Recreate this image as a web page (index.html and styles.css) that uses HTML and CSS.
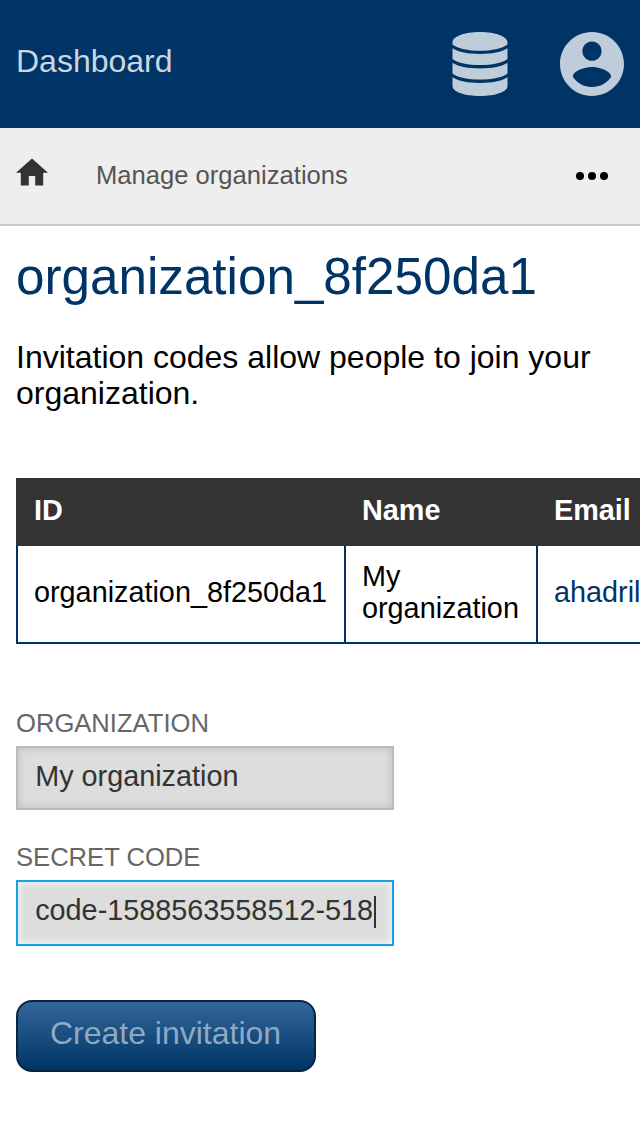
FILE: index.html
```html
<!DOCTYPE html>
<html lang="en">
<head>
<meta charset="utf-8">
<title>Manage organizations</title>
<link rel="stylesheet" href="styles.css">
</head>
<body>
<header class="topbar">
  <span class="topbar-title">Dashboard</span>
  <svg class="icon-db" width="56" height="64" viewBox="0 0 56 64" aria-hidden="true"><path d="M28 0C43.500 0 55.500 4.500 55.500 10.500V12.500C50 16.500 40 18.800 28 18.800S6 16.500 .5 12.500V10.500C.5 4.500 12.500 0 28 0ZM.5 16.300C6 20 16 22 28 22S50 20 55.500 16.300V27C50 31 40 33.100 28 33.100S6 31 .5 27ZM.5 30.800C6 34.500 16 36.500 28 36.500S50 34.500 55.500 30.800V41.500C50 45.500 40 47.600 28 47.600S6 45.500 .5 41.500ZM.5 45.300C6 49 16 51 28 51S50 49 55.500 45.300V54C55.500 60 43 64 28 64S.5 60 .5 54Z"/></svg>
  <svg class="icon-user" width="64" height="64" viewBox="2 2 20 20" aria-hidden="true"><path d="M12 2C6.480 2 2 6.480 2 12s4.480 10 10 10 10-4.480 10-10S17.520 2 12 2zm0 3c1.660 0 3 1.340 3 3s-1.340 3-3 3-3-1.340-3-3 1.340-3 3-3zm0 14.200c-2.500 0-4.710-1.280-6-3.220.03-1.990 4-3.080 6-3.080 1.990 0 5.970 1.090 6 3.080-1.290 1.940-3.500 3.220-6 3.220z"/></svg>
</header>
<nav class="crumbs">
  <svg class="icon-home" width="32" height="28" viewBox="2 2.750 20 17.500" aria-hidden="true"><path d="M10 20v-6h4v6h5v-8h3L12 3 2 12h3v8z"/></svg>
  <span class="crumb">Manage organizations</span>
  <svg class="icon-more" width="32" height="8" viewBox="0 0 32 8" aria-hidden="true"><circle cx="4" cy="4" r="4"/><circle cx="16" cy="4" r="4"/><circle cx="28" cy="4" r="4"/></svg>
</nav>
<main class="content">
  <h1 class="title">organization_8f250da1</h1>
  <p class="intro">Invitation codes allow people to join your organization.</p>
  <div class="table-wrap">
    <table class="table">
      <thead><tr><th class="col-id">ID</th><th class="col-name">Name</th><th class="col-email">Email</th></tr></thead>
      <tbody><tr><td>organization_8f250da1</td><td>My organization</td><td><a class="mail">ahadril</a></td></tr></tbody>
    </table>
  </div>
  <form class="form">
    <label class="label">ORGANIZATION</label>
    <div class="field">My organization</div>
    <label class="label label-code">SECRET CODE</label>
    <div class="field field-focus">code-1588563558512-518<span class="caret"></span></div>
    <button class="submit" type="button">Create invitation</button>
  </form>
</main>
</body>
</html>
```
FILE: styles.css
```css
* { box-sizing: border-box; }
body {
  margin: 0;
  overflow: hidden;
  background: #fff;
  color: #000;
  font: 32px/36px "Liberation Sans", Arial, sans-serif;
}
svg { display: block; flex: none; }

.topbar {
  display: flex;
  align-items: flex-start;
  height: 128px;
  padding: 32px 16px 0;
  background: #036;
  color: #ccd6e0;
}
.topbar-title { flex: 1; padding-top: 11px; }
.icon-db, .icon-user { fill: #bfccd9; }
.icon-user { margin-left: 52px; }

.crumbs {
  display: flex;
  align-items: flex-start;
  height: 98px;
  padding: 30px 32px 0 16px;
  border-bottom: 2px solid #ccc;
  background: #eee;
}
.icon-home { fill: #333; }
.crumb {
  flex: 1;
  margin-left: 48px;
  padding-top: 2px;
  font-size: 25.6px;
  line-height: 30px;
  color: #555;
}
.icon-more { margin-top: 14px; }

.content { padding: 22px 16px 0; }
.title {
  margin: 0;
  font-size: 51.2px;
  font-weight: normal;
  line-height: 58px;
  color: #036;
}
.intro { margin: 33px 0 67px; }

.table-wrap { width: 624px; overflow: hidden; }
.table {
  width: 900px;
  table-layout: fixed;
  border-collapse: separate;
  border-spacing: 0;
  font-size: 28.8px;
  line-height: 32px;
}
.table th {
  height: 68px;
  padding: 16px 16px 20px 18px;
  background: #333;
  color: #fff;
  text-align: left;
}
.table td {
  padding: 14px 16px 18px;
  border-left: 2px solid #036;
  border-bottom: 2px solid #036;
  vertical-align: middle;
}
.col-id { width: 328px; }
.col-name { width: 192px; }
.mail { color: #036; }

.form { margin-top: 64px; }
.label {
  display: block;
  margin-bottom: 8px;
  font-size: 25.6px;
  line-height: 30px;
  color: #666;
}
.label-code { margin-top: 32px; }
.field {
  display: flex;
  width: 378px;
  height: 64px;
  padding: 12px 0 0 17.200px;
  border: 2px solid #bbb;
  background: #ddd;
  box-shadow: inset 0 0 8px rgba(0, 0, 0, .15);
  font-size: 28.8px;
  line-height: 32px;
  color: #333;
}
.field-focus {
  height: 66px;
  border-color: #18a0e8;
  box-shadow: inset 0 0 8px rgba(255, 255, 255, .85);
}
.caret { width: 2px; height: 32px; margin: 2px 0 0 1px; background: #333; }

.submit {
  display: block;
  width: 300px;
  height: 72px;
  margin-top: 54px;
  padding: 0 1px 6px 0;
  border: 2px solid #0a2440;
  border-radius: 16px;
  background: linear-gradient(#369, #036);
  font: 32px/36px "Liberation Sans", Arial, sans-serif;
  color: #8fa9c3;
}
```
